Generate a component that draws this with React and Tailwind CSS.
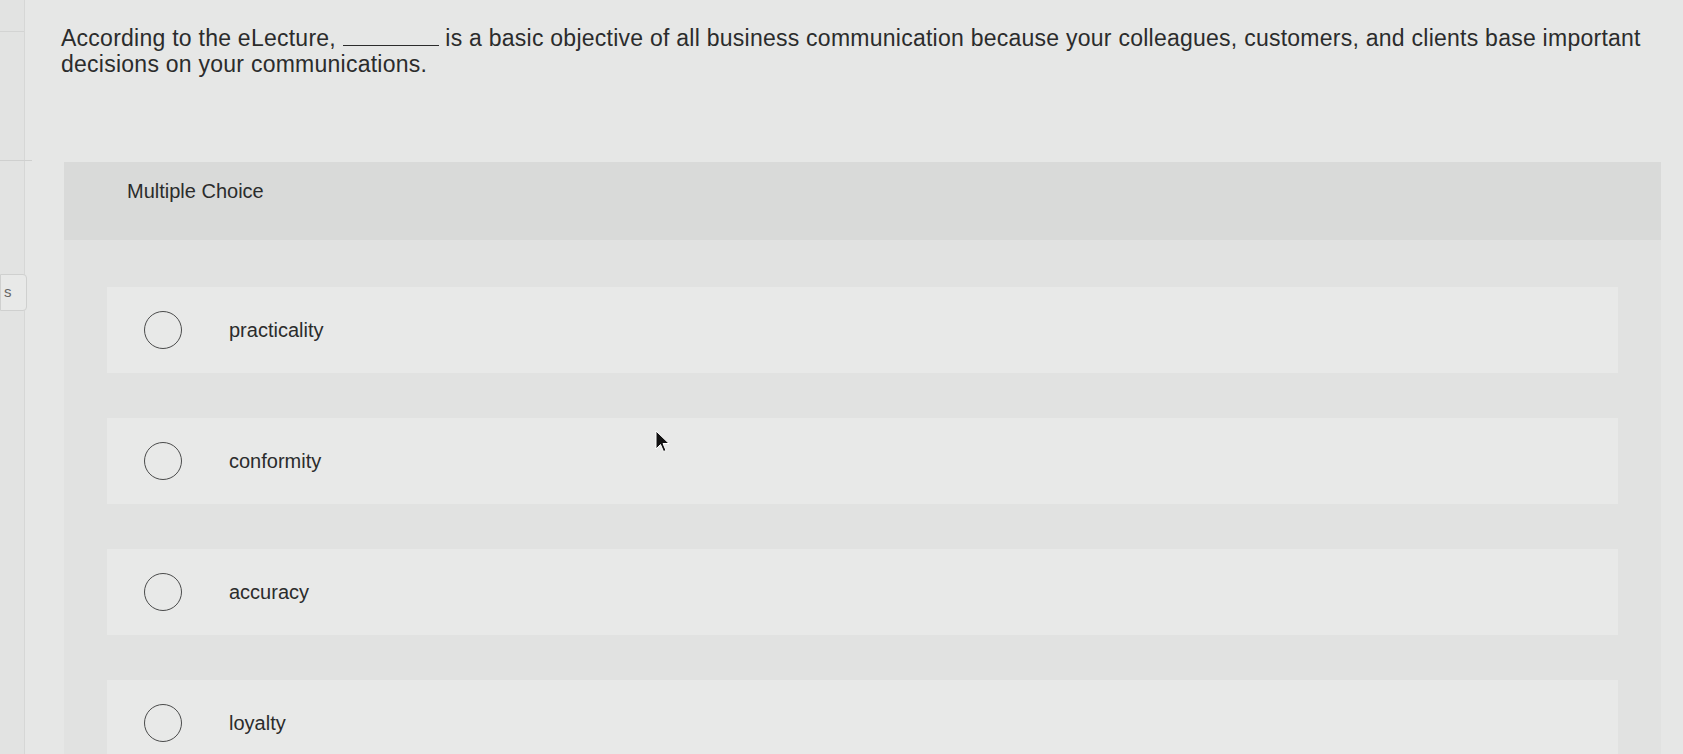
import { useState } from 'react'

const options = ['practicality', 'conformity', 'accuracy', 'loyalty']

function Cursor() {
    return (
        <svg className="absolute left-[655px] top-[430px]" width="16" height="24" viewBox="0 0 16 24">
            <path d="M1 1 L1 19 L5.5 14.5 L8.5 21.5 L11 20.5 L8 13.5 L14 13.5 Z" fill="#111" stroke="#fff" strokeWidth="1" />
        </svg>
    )
}

export default function App() {
    const [picked, setPicked] = useState(null)

    return (
        <div
            className="relative h-screen w-full overflow-hidden bg-[#e6e7e6] text-[#2b2c2c] flex"
            style={{ fontFamily: '"Liberation Sans", Arial, sans-serif' }}
        >
            {/* faint sidebar edge on the left */}
            <div className="w-[25px] shrink-0 border-r border-[#d6d7d6] bg-[#e2e3e2] flex flex-col">
                <div className="h-[32px] border-b border-[#d3d4d3]" />
                <div className="mt-[128px] h-px w-[32px] bg-[#cfd0cf]" />
                <div className="mt-[113px] h-[37px] w-[27px] border border-[#cfd0cf] rounded-r bg-[#e8e9e8] flex items-center text-[15px] text-[#666] pl-[3px]">
                    s
                </div>
            </div>

            <div className="flex-1 pl-[36px] pr-[22px] pt-[25px] flex flex-col min-w-0">
                <p className="text-[23px] leading-[26px] tracking-[0.25px]">
                    According to the eLecture,{' '}
                    <span className="inline-block w-[96px] h-[1px] bg-[#2b2c2c] align-baseline" />{' '}
                    is a basic objective of all business communication because your colleagues, customers, and clients base important decisions on your communications.
                </p>

                <div className="mt-[85px] ml-[3px] flex-1 bg-[#e1e2e1] flex flex-col">
                    <div className="h-[78px] bg-[#d9dad9] px-[63px] pt-[16px]">
                        <span className="text-[20px] leading-[26px]">Multiple Choice</span>
                    </div>

                    <div className="px-[43px] pt-[47px] flex flex-col gap-[45px]">
                        {options.map((opt, i) => (
                            <button
                                key={opt}
                                onClick={() => setPicked(i)}
                                className="h-[86px] shrink-0 bg-[#e8e9e8] flex items-center pl-[37px] text-left cursor-pointer"
                            >
                                <span className="w-[38px] h-[38px] rounded-full border-[1.5px] border-[#4a4b4b] flex items-center justify-center">
                                    {picked === i && <span className="w-[18px] h-[18px] rounded-full bg-[#4a4b4b]" />}
                                </span>
                                <span className="ml-[47px] text-[20px] leading-[26px]">{opt}</span>
                            </button>
                        ))}
                    </div>
                </div>
            </div>

            <Cursor />
        </div>
    )
}
